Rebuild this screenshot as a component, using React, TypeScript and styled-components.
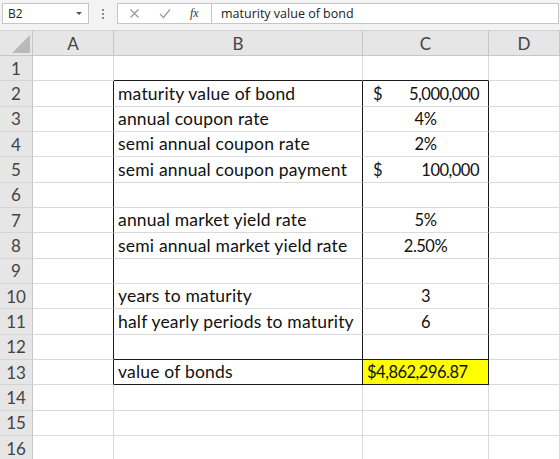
import React from 'react';
import styled, { createGlobalStyle } from 'styled-components';

const GlobalStyle = createGlobalStyle`
  html, body {
    margin: 0;
    padding: 0;
    background: #ffffff;
    overflow: hidden;
  }
  body {
    font-family: Lato, "Open Sans", sans-serif;
  }
`;

const ROW_H = 25.33;

const Sheet = styled.div`
  width: 560px;
  height: 459px;
  overflow: hidden;
  background: #ffffff;
`;

const FormulaBar = styled.div`
  height: 31px;
  display: flex;
  align-items: flex-start;
  padding-top: 3px;
  box-sizing: border-box;
  background: #f3f3f3;
  border-bottom: 1px solid #d4d4d4;
`;

const NameBox = styled.div`
  width: 87px;
  height: 21px;
  margin-left: 2px;
  box-sizing: border-box;
  background: #ffffff;
  border: 1px solid #c6c6c6;
  display: flex;
  align-items: center;
  justify-content: space-between;
  padding: 0 6px 0 5px;
  font-family: "Open Sans", sans-serif;
  font-size: 12px;
  color: #222;
`;

const DropArrow = styled.span`
  width: 0;
  height: 0;
  border-left: 3px solid transparent;
  border-right: 3px solid transparent;
  border-top: 3px solid #555;
`;

const Dots = styled.div`
  width: 28px;
  height: 21px;
  display: flex;
  flex-direction: column;
  align-items: center;
  justify-content: center;
  gap: 2px;
  span {
    width: 2px;
    height: 2px;
    background: #8a8a8a;
  }
`;

const IconBox = styled.div`
  width: 95px;
  height: 21px;
  box-sizing: border-box;
  background: #ffffff;
  border: 1px solid #c6c6c6;
  display: flex;
  align-items: center;
  padding-left: 11px;
  gap: 19px;
`;

const Fx = styled.span`
  font-family: "Liberation Serif", serif;
  font-style: italic;
  font-size: 12px;
  color: #333;
`;

const FormulaInput = styled.div`
  flex: 1;
  height: 21px;
  box-sizing: border-box;
  background: #ffffff;
  border: 1px solid #c6c6c6;
  border-left: none;
  margin-right: 1px;
  display: flex;
  align-items: center;
  padding-left: 9px;
  font-family: "Open Sans", sans-serif;
  font-size: 12.5px;
  color: #222;
`;

const Grid = styled.div`
  display: grid;
  grid-template-columns: 33px 81px 249px 126px 71px;
  grid-template-rows: 25px repeat(16, ${ROW_H}px);
  font-family: Lato, "Open Sans", sans-serif;
`;

const Corner = styled.div`
  position: relative;
  background: #e6e6e6;
  border-right: 1px solid #c6c6c6;
  border-bottom: 1px solid #c6c6c6;
  box-sizing: border-box;
  overflow: hidden;
`;

const CornerTriangle = styled.span`
  position: absolute;
  right: 2px;
  bottom: 2px;
  width: 0;
  height: 0;
  border-left: 18px solid transparent;
  border-bottom: 18px solid #b9b9b9;
`;

const ColHead = styled.div`
  background: #e6e6e6;
  border-right: 1px solid #c6c6c6;
  border-bottom: 1px solid #c6c6c6;
  box-sizing: border-box;
  display: flex;
  align-items: center;
  justify-content: center;
  font-size: 17px;
  color: #444;
`;

const RowHead = styled.div`
  background: #e6e6e6;
  border-right: 1px solid #c6c6c6;
  border-bottom: 1px solid #d4d4d4;
  box-sizing: border-box;
  display: flex;
  align-items: center;
  justify-content: center;
  font-size: 17px;
  color: #444;
`;

const Cell = styled.div<{ $rb?: boolean; $bb?: boolean; $align?: string; $fill?: string; $num?: boolean }>`
  box-sizing: border-box;
  border-right: 1px solid ${(p) => (p.$rb ? '#1a1a1a' : '#dadada')};
  border-bottom: 1px solid ${(p) => (p.$bb ? '#1a1a1a' : '#dadada')};
  background: ${(p) => p.$fill || '#ffffff'};
  display: flex;
  align-items: flex-end;
  justify-content: ${(p) => p.$align || 'flex-start'};
  padding: 0 4px 2px 4px;
  font-size: ${(p) => (p.$num ? '16.5px' : '17.5px')};
  letter-spacing: ${(p) => (p.$num ? '-0.5px' : '0.2px')};
  color: #111;
  white-space: nowrap;
  overflow: hidden;
`;

const Accounting = styled.div`
  flex: 1;
  display: flex;
  justify-content: space-between;
  padding: 0 5px 0 6px;
`;

type Val = { kind: 'acct'; amount: string } | { kind: 'center'; text: string } | { kind: 'left'; text: string };

const rows: { label?: string; value?: Val }[] = [
  {},
  { label: 'maturity value of bond', value: { kind: 'acct', amount: '5,000,000' } },
  { label: 'annual coupon rate', value: { kind: 'center', text: '4%' } },
  { label: 'semi annual coupon rate', value: { kind: 'center', text: '2%' } },
  { label: 'semi annual coupon payment', value: { kind: 'acct', amount: '100,000' } },
  {},
  { label: 'annual market yield rate', value: { kind: 'center', text: '5%' } },
  { label: 'semi annual market yield rate', value: { kind: 'center', text: '2.50%' } },
  {},
  { label: 'years to maturity', value: { kind: 'center', text: '3' } },
  { label: 'half yearly periods to maturity', value: { kind: 'center', text: '6' } },
  {},
  { label: 'value of bonds', value: { kind: 'left', text: '$4,862,296.87' } },
  {},
  {},
  {},
];

export default function App() {
  return (
    <Sheet>
      <GlobalStyle />
      <FormulaBar>
        <NameBox>
          B2
          <DropArrow />
        </NameBox>
        <Dots>
          <span />
          <span />
          <span />
        </Dots>
        <IconBox>
          <svg width="11" height="11" viewBox="0 0 11 11">
            <path d="M1.5 1.5 L9.5 9.5 M9.5 1.5 L1.5 9.5" stroke="#9a9a9a" strokeWidth="1.2" fill="none" />
          </svg>
          <svg width="12" height="11" viewBox="0 0 12 11">
            <path d="M1 6 L4.5 9.5 L11 1.5" stroke="#9a9a9a" strokeWidth="1.2" fill="none" />
          </svg>
          <Fx>fx</Fx>
        </IconBox>
        <FormulaInput>maturity value of bond</FormulaInput>
      </FormulaBar>
      <Grid>
        <Corner>
          <CornerTriangle />
        </Corner>
        <ColHead>A</ColHead>
        <ColHead>B</ColHead>
        <ColHead>C</ColHead>
        <ColHead>D</ColHead>
        {rows.map((r, i) => {
          const n = i + 1;
          const inBox = n >= 2 && n <= 13;
          const boxBottom = n === 1 || n === 12 || n === 13;
          const v = r.value;
          return (
            <React.Fragment key={n}>
              <RowHead>{n}</RowHead>
              <Cell $rb={inBox} />
              <Cell $rb={inBox} $bb={boxBottom}>
                {r.label}
              </Cell>
              <Cell
                $num
                $rb={inBox}
                $bb={boxBottom}
                $align={v && v.kind === 'center' ? 'center' : 'flex-start'}
                $fill={n === 13 ? '#ffff00' : undefined}
              >
                {v && v.kind === 'acct' && (
                  <Accounting>
                    <span>$</span>
                    <span>{v.amount}</span>
                  </Accounting>
                )}
                {v && v.kind !== 'acct' && v.text}
              </Cell>
              <Cell />
            </React.Fragment>
          );
        })}
      </Grid>
    </Sheet>
  );
}
